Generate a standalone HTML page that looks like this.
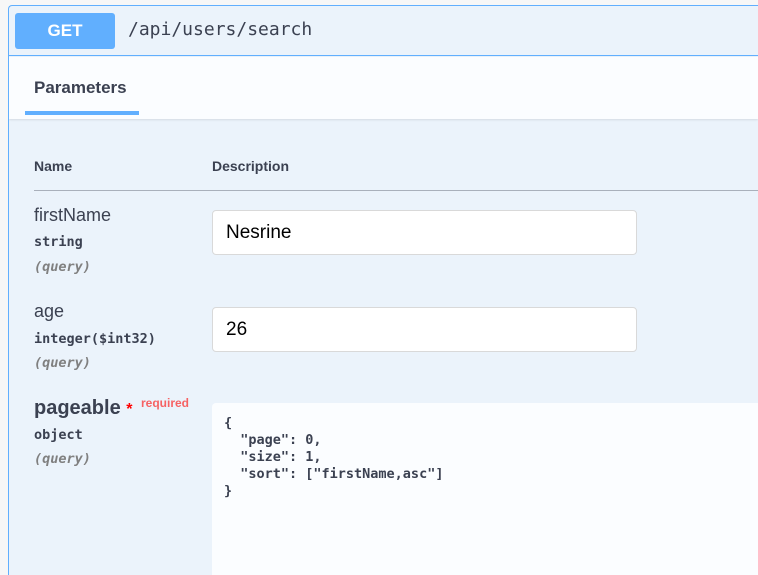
<!DOCTYPE html>
<html style="width:758px;height:575px;overflow:hidden"><head><meta charset="utf-8"><style>
*{box-sizing:border-box;margin:0;padding:0}
body{width:758px;height:575px;overflow:hidden;background:#f7f7f7;font-family:"Liberation Sans",sans-serif;color:#3b4151;position:relative}
.op{position:absolute;left:8px;top:5px;width:750px;height:570px;border:1px solid #61affe;border-right:none;border-bottom:none;border-radius:4px 0 0 0;background:#ebf3fb;overflow:hidden}
.hdr{position:absolute;left:0;top:0;right:0;height:50px;border-bottom:1px solid #61affe}
.get{position:absolute;left:6px;top:7px;width:100px;height:36px;background:#61affe;border-radius:3px;color:#fff;font-weight:bold;font-size:17px;text-align:center;line-height:36px}
.path{position:absolute;left:119px;top:13px;font-family:"DejaVu Sans Mono",monospace;font-size:18px;color:#3b4151}
.tabs{position:absolute;left:0;top:51px;right:0;height:62px;background:#fbfdff;box-shadow:0 1px 2px rgba(0,0,0,.1)}
.tab{position:absolute;left:25px;top:21px;font-weight:bold;font-size:17px}
.ul{position:absolute;left:16px;top:54px;width:114px;height:4px;background:#61affe}
.t{position:absolute;white-space:nowrap}
.th{font-weight:bold;font-size:14px;top:152px}
.line{position:absolute;left:25px;right:0;top:184px;height:1px;background:#a9b0bb}
.nm{font-size:18px}
.ty{font-family:"DejaVu Sans Mono",monospace;font-weight:bold;font-size:13.5px}
.q{font-family:"DejaVu Sans Mono",monospace;font-style:italic;font-weight:bold;font-size:13.5px;color:#808080}
.in{position:absolute;left:203px;width:425px;height:45px;background:#fff;border:1px solid #d9d9d9;border-radius:4px;font-size:19px;padding-left:13px;line-height:43px;color:#000}
.ta{position:absolute;left:203px;top:397px;width:560px;height:173px;background:#fbfdff;border-radius:4px 0 0 0;font-family:"DejaVu Sans Mono",monospace;font-weight:bold;font-size:13.5px;line-height:17px;padding:12px 0 0 12px;white-space:pre;color:#3b4151}
</style></head><body>
<div class="op">
<div class="hdr"><div class="get">GET</div><div class="path">/api/users/search</div></div>
<div class="tabs"><div class="tab">Parameters</div><div class="ul"></div></div>
<div class="t th" style="left:25px">Name</div>
<div class="t th" style="left:203px">Description</div>
<div class="line"></div>
<div class="t nm" style="left:25px;top:199px">firstName</div>
<div class="t ty" style="left:25px;top:228px">string</div>
<div class="t q" style="left:25px;top:253px">(query)</div>
<div class="in" style="top:204px">Nesrine</div>
<div class="t nm" style="left:25px;top:295px">age</div>
<div class="t ty" style="left:25px;top:325px">integer($int32)</div>
<div class="t q" style="left:25px;top:349px">(query)</div>
<div class="in" style="top:301px">26</div>
<div class="t" style="left:25px;top:391px;font-size:20px;font-weight:bold">pageable <span style="color:#f00;font-size:16px">*</span></div>
<div class="t" style="left:132px;top:390px;font-size:12px;font-weight:bold;color:#f93e3e;opacity:.8">required</div>
<div class="t ty" style="left:25px;top:421px">object</div>
<div class="t q" style="left:25px;top:445px">(query)</div>
<div class="ta">{
  "page": 0,
  "size": 1,
  "sort": ["firstName,asc"]
}</div>
</div>
</body></html>
